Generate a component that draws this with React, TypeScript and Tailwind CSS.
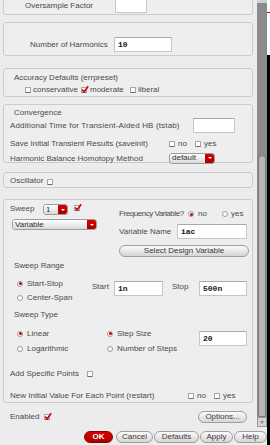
import React from "react";

function Check({ on = false }: { on?: boolean }) {
  return (
    <span className="relative inline-block w-[6px] h-[6px] shrink-0 bg-white border border-[#a6a6a6] border-b-[#6e6e6e] rounded-[1px]">
      {on && (
        <svg className="absolute -top-[3px] -left-[1px]" width="8" height="8" viewBox="0 0 8 8">
          <path d="M1.2 4.6 L3.2 6.8 L7.2 1.2" stroke="#d10000" strokeWidth="1.6" fill="none" />
        </svg>
      )}
    </span>
  );
}

function Radio({ on = false }: { on?: boolean }) {
  return (
    <span className="inline-flex items-center justify-center w-[6px] h-[6px] shrink-0 rounded-full bg-white border border-[#9c9c9c]">
      {on && <span className="w-[3px] h-[3px] rounded-full bg-[#d10000]" />}
    </span>
  );
}

function Box({ className, children }: { className: string; children: React.ReactNode }) {
  return (
    <div className={`w-[250px] shrink-0 rounded-[3px] border border-[#cbcbcb] bg-[#eeeeee] ${className}`}>
      {children}
    </div>
  );
}

function Field({ w, value }: { w: string; value: string }) {
  return (
    <div
      className={`h-[15px] ${w} shrink-0 bg-white border border-[#c6c6c6] border-t-[#a9a9a9] rounded-[1px] flex items-center pl-[3px] font-['Liberation_Mono',monospace] font-bold text-[8px] text-[#161616]`}
    >
      {value}
    </div>
  );
}

function Dropdown({ w, label }: { w: string; label: string }) {
  return (
    <div className={`flex ${w} h-[11px] shrink-0 rounded-[3px] border border-[#9d9d9d] overflow-hidden`}>
      <div className="flex-1 bg-gradient-to-b from-white to-[#d9d9d9] pl-[2px] flex items-center text-[#333]">
        {label}
      </div>
      <div className="w-[9px] bg-gradient-to-b from-[#d80000] to-[#a90000] flex items-center justify-center">
        <span className="w-0 h-0 border-l-[2px] border-r-[2px] border-t-[2px] border-l-transparent border-r-transparent border-t-white" />
      </div>
    </div>
  );
}

function Pill({ w, children }: { w: string; children: React.ReactNode }) {
  return (
    <div
      className={`${w} h-[12px] shrink-0 rounded-full border border-[#9f9f9f] bg-gradient-to-b from-[#fbfbfb] to-[#d6d6d6] flex items-center justify-center text-[#3a3a3a]`}
    >
      {children}
    </div>
  );
}

export default function App() {
  return (
    <div className="w-[270px] h-[445px] overflow-hidden flex bg-[#ececec] font-['Liberation_Sans',Arial,sans-serif] text-[8px] leading-[10px] text-[#4a4a4a] whitespace-nowrap">
      <div className="w-[267px] flex flex-col">
        <div className="flex h-[427px]">
          <div className="w-[257px] pl-[3px] flex flex-col overflow-hidden">
            <Box className="h-[25px] -mt-[10px] flex items-end pb-[1px]">
              <span className="w-[111px] pl-[21px] mb-[2px]">Oversample Factor</span>
              <Field w="w-[32px]" value="" />
            </Box>

            <Box className="h-[34px] mt-[7px] pt-[14px] flex items-start">
              <div className="flex items-center h-[15px]">
                <span className="w-[110px] pl-[26px]">Number of Harmonics</span>
                <Field w="w-[58px]" value="10" />
              </div>
            </Box>

            <Box className="h-[29px] mt-[12px] pt-[4px]">
              <div className="pl-[10px]">Accuracy Defaults (errpreset)</div>
              <div className="flex items-center pl-[21px] mt-[2px]">
                <span className="w-[56px] flex items-center gap-[2px]"><Check />conservative</span>
                <span className="w-[49px] flex items-center gap-[3px]"><Check on />moderate</span>
                <span className="flex items-center gap-[2px]"><Check />liberal</span>
              </div>
            </Box>

            <Box className="h-[59px] mt-[7px] pt-[3px]">
              <div className="pl-[10px]">Convergence</div>
              <div className="flex items-center h-[15px] pl-[6px]">
                <span className="w-[183px] tracking-[0.15px]">Additional Time for Transient-Aided HB (tstab)</span>
                <Field w="w-[42px]" value="" />
              </div>
              <div className="flex items-center pl-[6px] mt-[6px]">
                <span className="w-[159px]">Save Initial Transient Results (saveinit)</span>
                <span className="w-[26px] flex items-center gap-[3px]"><Check />no</span>
                <span className="flex items-center gap-[3px]"><Check />yes</span>
              </div>
              <div className="flex items-center pl-[6px] mt-[3px]">
                <span className="w-[159px] mt-[2px]">Harmonic Balance Homotopy Method</span>
                <Dropdown w="w-[46px]" label="default" />
              </div>
            </Box>

            <Box className="h-[16px] mt-[9px] pt-[3px] pl-[6px] flex items-start gap-[4px]">
              <span>Oscillator</span>
              <span className="mt-[2px]"><Check /></span>
            </Box>

            <Box className="h-[204px] mt-[11px] pt-[4px] flex flex-col">
              <div className="flex">
                <div className="w-[115px] shrink-0">
                  <div className="flex items-start pl-[6px]">
                    <span className="w-[33px]">Sweep</span>
                    <Dropdown w="w-[25px]" label="1" />
                    <span className="ml-[6px]"><Check on /></span>
                  </div>
                  <div className="pl-[8px] mt-[4px]">
                    <Dropdown w="w-[85px]" label="Variable" />
                  </div>
                </div>
                <div className="pt-[5px]">
                  <div className="flex items-center">
                    <span className="w-[69px] tracking-[-0.45px]">Frequency Variable?</span>
                    <span className="w-[34px] flex items-center gap-[4px]"><Radio on />no</span>
                    <span className="flex items-center gap-[3px]"><Radio />yes</span>
                  </div>
                  <div className="flex items-center mt-[5px]">
                    <span className="w-[58px]">Variable Name</span>
                    <Field w="w-[70px]" value="iac" />
                  </div>
                  <div className="mt-[6px]">
                    <Pill w="w-[130px]">Select Design Variable</Pill>
                  </div>
                </div>
              </div>

              <div className="pl-[10px] mt-[4px]">Sweep Range</div>
              <div className="flex items-start mt-[7px]">
                <div className="w-[88px] shrink-0 pl-[13px] flex flex-col gap-[3px]">
                  <span className="flex items-center gap-[4px] h-[11px]"><Radio on />Start-Stop</span>
                  <span className="flex items-center gap-[4px] h-[11px]"><Radio />Center-Span</span>
                </div>
                <div className="flex items-center mt-[3px]">
                  <span className="w-[22px] -mt-[3px]">Start</span>
                  <Field w="w-[49px]" value="1n" />
                  <span className="w-[27px] ml-[9px] -mt-[3px]">Stop</span>
                  <Field w="w-[48px]" value="500n" />
                </div>
              </div>

              <div className="pl-[10px] mt-[7px]">Sweep Type</div>
              <div className="flex items-start mt-[8px]">
                <div className="w-[103px] shrink-0 pl-[13px] flex flex-col gap-[4px]">
                  <span className="flex items-center gap-[4px] h-[11px]"><Radio on />Linear</span>
                  <span className="flex items-center gap-[4px] h-[11px]"><Radio />Logarithmic</span>
                </div>
                <div className="w-[92px] shrink-0 flex flex-col gap-[4px]">
                  <span className="flex items-center gap-[4px] h-[11px]"><Radio on />Step Size</span>
                  <span className="flex items-center gap-[4px] h-[11px]"><Radio />Number of Steps</span>
                </div>
                <div className="mt-[3px]">
                  <Field w="w-[48px]" value="20" />
                </div>
              </div>

              <div className="flex items-center pl-[6px] mt-[15px]">
                <span className="w-[77px]">Add Specific Points</span>
                <Check />
              </div>
              <div className="flex items-center pl-[6px] mt-[12px]">
                <span className="w-[178px]">New Initial Value For Each Point (restart)</span>
                <span className="w-[26px] flex items-center gap-[3px]"><Check />no</span>
                <span className="flex items-center gap-[3px]"><Check />yes</span>
              </div>
            </Box>

            <div className="w-[250px] flex items-center mt-[8px] pl-[7px] pr-[6px]">
              <span className="w-[34px]">Enabled</span>
              <Check on />
              <div className="ml-auto">
                <Pill w="w-[49px]">Options...</Pill>
              </div>
            </div>
          </div>

          <div className="w-[10px] h-full bg-[#8b8b8b] flex flex-col">
            <div className="h-[3px] bg-[#cfcfcf]" />
            <div className="flex-1" />
            <div className="h-[262px] mx-[1px] rounded-t-[4px] rounded-b-[2px] bg-[#b6b6b6] border border-[#7c7c7c]" />
            <div className="h-[10px] bg-[#d3d3d3] border border-[#9a9a9a] flex items-center justify-center">
              <span className="w-0 h-0 border-l-[2px] border-r-[2px] border-t-[3px] border-l-transparent border-r-transparent border-t-[#8a8a8a]" />
            </div>
          </div>
        </div>

        <div className="h-[18px] flex items-start pt-[4px] pl-[84px]">
          <div className="w-[29px] h-[12px] rounded-full bg-gradient-to-b from-[#dc0000] to-[#a50000] border border-[#8a0000] flex items-center justify-center text-white font-bold">
            OK
          </div>
          <div className="ml-[3px]"><Pill w="w-[37px]">Cancel</Pill></div>
          <div className="ml-[1px]"><Pill w="w-[45px]">Defaults</Pill></div>
          <div className="ml-[1px]"><Pill w="w-[33px]">Apply</Pill></div>
          <div className="ml-[1px]"><Pill w="w-[33px]">Help</Pill></div>
        </div>
      </div>

      <div className="w-[3px] flex flex-col">
        <div className="h-[55px] bg-white flex flex-col">
          <div className="h-[12px]" />
          <div className="h-[1px] bg-[#d00000]" />
        </div>
        <div className="flex-1 bg-black" />
      </div>
    </div>
  );
}
